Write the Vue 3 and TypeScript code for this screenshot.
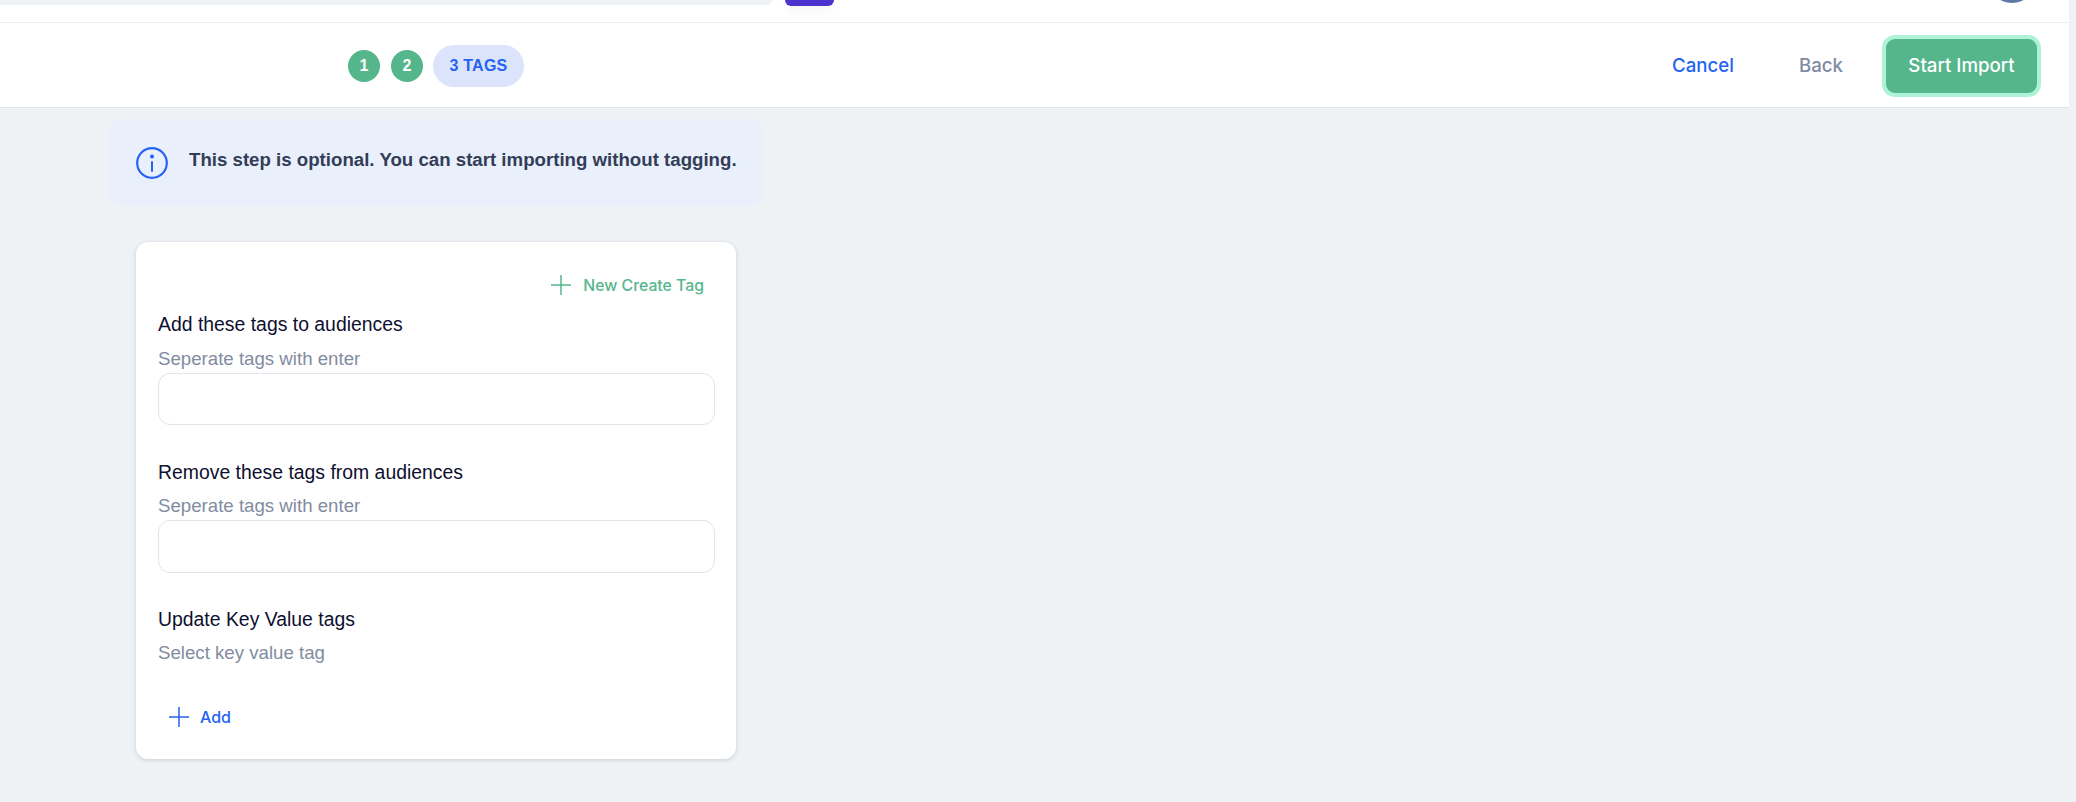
<script setup lang="ts">
const steps: string[] = ['1', '2']
</script>

<template>
  <div class="page">
    <div class="main">
      <div class="top">
        <div class="search"></div>
        <div class="purple"></div>
        <div class="avatar"></div>
      </div>
      <div class="bar">
        <div class="steps">
          <span v-for="s in steps" :key="s" class="dot">{{ s }}</span>
          <span class="pill">3 TAGS</span>
        </div>
        <div class="actions">
          <span class="cancel">Cancel</span>
          <span class="back">Back</span>
          <span class="start">Start Import</span>
        </div>
      </div>
      <div class="content">
        <div class="note">
          <svg class="info" width="32" height="32" viewBox="0 0 32 32" fill="none">
            <circle cx="16" cy="16" r="14.8" stroke="#2563f0" stroke-width="2.2" />
            <circle cx="16" cy="9.5" r="2" fill="#2563f0" />
            <path d="M16 15v9" stroke="#2563f0" stroke-width="2" stroke-linecap="round" />
          </svg>
          <span class="note-text">This step is optional. You can start importing without tagging.</span>
        </div>
        <div class="card">
          <div class="create">
            <svg width="20" height="20" viewBox="0 0 20 20" fill="none"><path d="M10 0v20M0 10h20" stroke="#55b68c" stroke-width="1.5" /></svg>
            <span>New Create Tag</span>
          </div>
          <div class="label first">Add these tags to audiences</div>
          <div class="sub first-sub">Seperate tags with enter</div>
          <div class="field"></div>
          <div class="label second">Remove these tags from audiences</div>
          <div class="sub">Seperate tags with enter</div>
          <div class="field tall"></div>
          <div class="label third">Update Key Value tags</div>
          <div class="sub">Select key value tag</div>
          <div class="add">
            <svg width="20" height="20" viewBox="0 0 20 20" fill="none"><path d="M10 0v20M0 10h20" stroke="#2563f0" stroke-width="1.5" /></svg>
            <span>Add</span>
          </div>
        </div>
      </div>
    </div>
    <div class="rail"></div>
  </div>
</template>

<style>
html, body { margin: 0; background: #eef2f5; }
</style>

<style scoped>
.page { display: flex; width: 2076px; height: 802px; overflow: hidden; background: #eef2f5; font-family: "Liberation Sans", Arial, sans-serif; }
.main { width: 2069px; flex: none; }
.rail { width: 7px; flex: none; background: #eef2f5; }
.top { height: 22px; background: #fff; border-bottom: 1px solid #e8eef4; display: flex; align-items: flex-start; overflow: hidden; }
.search { width: 772px; height: 5px; background: #eef2f5; border-bottom-right-radius: 10px; }
.purple { width: 49px; height: 6px; margin-left: 13px; background: #4c33d0; border-radius: 0 0 7px 7px; box-shadow: 0 4px 10px rgba(0,0,0,.06); }
.avatar { flex: none; width: 48px; height: 48px; margin: -45px 33px 0 auto; background: #5b7aa3; border-radius: 50%; }
.bar { height: 82px; background: #fff; border-bottom: 1px solid #dfe4ea; display: flex; justify-content: space-between; align-items: center; padding: 2px 32px 0 348px; }
.steps { display: flex; align-items: center; }
.dot { width: 32px; height: 32px; border-radius: 50%; background: #55b68c; color: #fff; font: 700 16px "Liberation Sans", sans-serif; display: flex; align-items: center; justify-content: center; margin-right: 11px; }
.dot + .pill { margin-left: -1px; }
.pill { width: 91px; height: 42px; border-radius: 21px; background: #dbe4fb; color: #2563f0; font: 700 16px "Liberation Sans", sans-serif; letter-spacing: .2px; display: flex; align-items: center; justify-content: center; }
.actions { display: flex; align-items: center; font: 500 18.67px "Inter", sans-serif; }
.cancel { color: #2563f0; margin: 0 65px 2px 0; }
.back { color: #7e8ba1; margin: 0 43px 2px 0; }
.start { width: 151px; height: 54px; box-sizing: border-box; padding-bottom: 1px; display: flex; align-items: center; justify-content: center; border-radius: 9px; background: #55b68c; color: #fff; box-shadow: 0 0 0 4px #aef2d8; }
.content { padding: 11px 0 0 109px; }
.note { width: 654px; height: 87px; box-sizing: border-box; padding-left: 27px; border-radius: 14px; background: #e9f0fc; display: flex; align-items: center; gap: 21px; color: #333d57; font-size: 18.67px; font-weight: 700; }
.note-text { padding-bottom: 5px; }
.info { flex: none; }
.card { width: 600px; height: 517px; box-sizing: border-box; margin: 36px 0 0 27px; padding: 33px 21px 0 22px; border-radius: 12px; background: #fff; box-shadow: 0 1px 4px rgba(60,70,90,.2); }
.create { display: flex; align-items: center; justify-content: flex-end; gap: 12px; padding-right: 11px; height: 20px; color: #55b68c; font: 500 15.8px "Inter", sans-serif; }
.label { font-size: 19.4px; line-height: 24px; color: #0e1030; }
.first { margin-top: 17px; }
.second { margin-top: 35px; }
.third { margin-top: 34px; }
.sub { font-size: 18.67px; line-height: 24px; margin-top: 10px; color: #828ca1; }
.first-sub { margin-top: 11px; }
.field { height: 50px; margin-top: 2px; border: 1px solid #dfe5ec; border-radius: 12px; }
.field.tall { height: 51px; }
.add { display: flex; align-items: center; gap: 11px; margin: 42px 0 0 11px; height: 20px; color: #2563f0; font: 500 16px "Inter", sans-serif; }
</style>
